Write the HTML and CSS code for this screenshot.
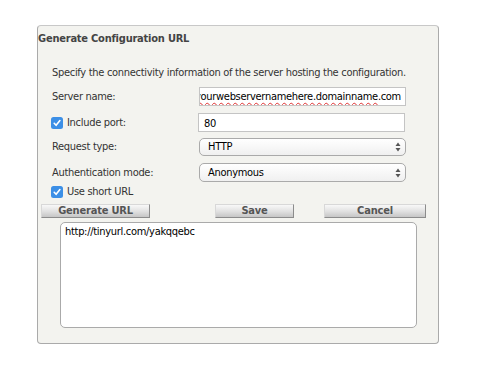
FILE: index.html
```html
<!DOCTYPE html>
<html>
<head>
<meta charset="utf-8">
<link rel="stylesheet" href="styles.css">
</head>
<body>
<div class="panel">
  <div class="title">Generate Configuration URL</div>
  <div class="desc">Specify the connectivity information of the server hosting the configuration.</div>
  <div class="row r1">
    <div class="label">Server name:</div>
    <div class="input"><span class="scroll"><span class="spell">yourwebservernamehere.domainname</span>.com</span></div>
  </div>
  <div class="row r2">
    <div class="label chk"><span class="box"><svg width="12" height="12" viewBox="0 0 12 12"><rect x="0" y="0" width="12" height="12" rx="2.5" fill="#3c8fe6"/><path d="M3.2 6.3 L5.1 8.3 L8.9 3.6" fill="none" stroke="#fff" stroke-width="1.6" stroke-linecap="round" stroke-linejoin="round"/></svg></span>Include port:</div>
    <div class="input">80</div>
  </div>
  <div class="row r3">
    <div class="label">Request type:</div>
    <div class="select">HTTP<span class="arrows"><svg width="6" height="10" viewBox="0 0 6 10"><path d="M3 0.5 L5.5 4 L0.5 4 Z" fill="#555"/><path d="M3 9.5 L5.5 6 L0.5 6 Z" fill="#555"/></svg></span></div>
  </div>
  <div class="row r4">
    <div class="label">Authentication mode:</div>
    <div class="select">Anonymous<span class="arrows"><svg width="6" height="10" viewBox="0 0 6 10"><path d="M3 0.5 L5.5 4 L0.5 4 Z" fill="#555"/><path d="M3 9.5 L5.5 6 L0.5 6 Z" fill="#555"/></svg></span></div>
  </div>
  <div class="row r5">
    <div class="label chk"><span class="box"><svg width="12" height="12" viewBox="0 0 12 12"><rect x="0" y="0" width="12" height="12" rx="2.5" fill="#3c8fe6"/><path d="M3.2 6.3 L5.1 8.3 L8.9 3.6" fill="none" stroke="#fff" stroke-width="1.6" stroke-linecap="round" stroke-linejoin="round"/></svg></span>Use short URL</div>
  </div>
  <div class="buttons">
    <div class="btn b-gen">Generate URL</div>
    <div class="btn b-save">Save</div>
    <div class="btn b-cancel">Cancel</div>
  </div>
  <div class="textarea">http://tinyurl.com/yakqqebc</div>
</div>
</body>
</html>
```
FILE: styles.css
```css
html, body {
  margin: 0;
  padding: 0;
  background: #ffffff;
}
body {
  font-family: "DejaVu Sans", sans-serif;
  font-stretch: condensed;
  font-size: 11px;
  line-height: 14px;
  letter-spacing: -0.3px;
  color: #333;
}
.panel {
  margin: 25px 0 0 37px;
  width: 400px;
  height: 317px;
  border: 1px solid #aaa;
  border-top-color: #c8c8c8;
  border-radius: 4px;
  background: #f3f3ef;
  display: flex;
  flex-direction: column;
}
.title {
  margin-top: 6px;
  font-weight: bold;
  letter-spacing: -0.22px;
  color: #444;
  height: 14px;
  white-space: nowrap;
}
.desc {
  margin-top: 20px;
  padding-left: 14px;
  height: 14px;
  white-space: nowrap;
}
.row {
  display: flex;
  align-items: center;
  padding-left: 14px;
}
.label {
  width: 147px;
  display: flex;
  align-items: center;
  white-space: nowrap;
}
.chk {
  margin-left: -1px;
}
.box {
  width: 12px;
  height: 12px;
  margin-right: 4px;
  display: flex;
}
.r1 { margin-top: 7px; }
.r2 { margin-top: 7px; }
.r3 { margin-top: 6px; }
.r4 { margin-top: 7px; }
.r5 { margin-top: 4px; height: 12px; }
.input {
  width: 200px;
  height: 17px;
  border: 1px solid #c4c4c4;
  background: #fff;
  padding-left: 5px;
  color: #000;
  line-height: 17px;
  overflow: hidden;
  white-space: nowrap;
}
.r2 .input { line-height: 19px; }
.scroll {
  display: inline-block;
  margin-left: -10px;
}
.spell {
  text-decoration: underline wavy #e03030;
  text-decoration-thickness: 1px;
  text-underline-offset: 2px;
}
.select {
  width: 197px;
  height: 16px;
  border: 1px solid #aaa;
  border-radius: 5px;
  background: linear-gradient(#ffffff, #f0f0f0);
  padding-left: 8px;
  color: #000;
  line-height: 16px;
  display: flex;
  align-items: center;
}
.r4 .select { height: 17px; }
.arrows {
  margin-left: auto;
  margin-right: 4px;
  display: flex;
}
.buttons {
  margin-top: 6px;
  padding-left: 3px;
  display: flex;
}
.btn {
  height: 12px;
  border: 1px solid #d8d8d8;
  border-right-color: #8c8c8c;
  border-bottom-color: #8c8c8c;
  background: linear-gradient(#f8f8f8, #e2e2e2 50%, #c6c6c6);
  font-weight: bold;
  letter-spacing: -0.2px;
  color: #555;
  text-align: center;
  line-height: 12px;
}
.b-gen { width: 107px; }
.b-save { width: 77px; margin-left: 65px; }
.b-cancel { width: 100px; margin-left: 30px; }
.textarea {
  margin-top: 4px;
  margin-left: 22px;
  width: 351px;
  height: 102px;
  border: 1px solid #aaa;
  border-radius: 5px;
  background: #fff;
  padding: 2px 0 0 4px;
  color: #000;
}
```
